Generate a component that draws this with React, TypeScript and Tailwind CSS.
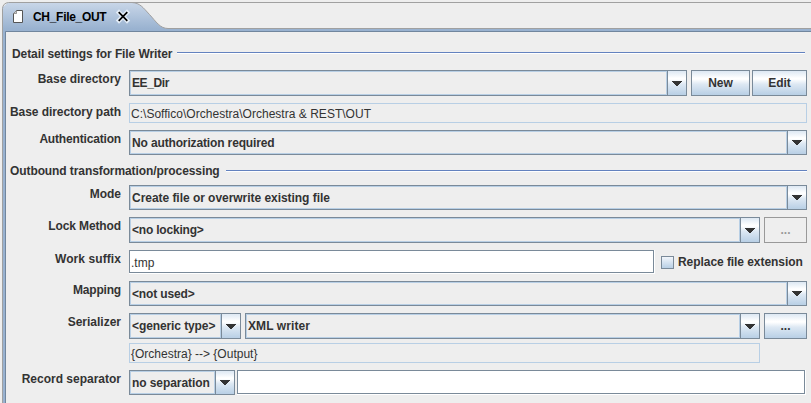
import type { ReactNode } from 'react';

const FONT = "font-['Liberation_Sans',Arial,sans-serif]";
const STEEL = 'bg-[linear-gradient(180deg,#dde8f3_0%,#ffffff_30%,#ffffff_34%,#dde8f3_55%,#b8cfe5_100%)]';

function Arrow() {
  return (
    <svg width="10" height="5" viewBox="0 0 10 5" shapeRendering="crispEdges" fill="#333333">
      <rect x="0" y="0" width="10" height="1" />
      <rect x="1" y="1" width="8" height="1" />
      <rect x="2" y="2" width="6" height="1" />
      <rect x="3" y="3" width="4" height="1" />
      <rect x="4" y="4" width="2" height="1" />
    </svg>
  );
}

function Combo({ text, className, spacing = '' }: { text: string; className: string; spacing?: string }) {
  return (
    <div className={`flex self-stretch border border-[#7a8a99] ${className}`}>
      <div className="flex-1 whitespace-nowrap border border-[#b8cfe5] pl-[1px] pt-[3px] leading-4 font-bold">
        <span className={spacing}>{text}</span>
      </div>
      <div className={`flex w-[19px] items-center justify-center border-l border-[#7a8a99] ${STEEL}`}>
        <Arrow />
      </div>
    </div>
  );
}

function Button({ text, className }: { text: string; className: string }) {
  return (
    <button className={`self-stretch border border-[#7a8a99] font-bold leading-4 ${STEEL} ${className}`}>
      {text}
    </button>
  );
}

function ReadOnly({ text, className, spacing = '' }: { text: string; className: string; spacing?: string }) {
  return (
    <div className={`border border-[#b8cfe5] pl-[1px] pt-[2px] leading-4 ${className}`}>
      <span className={spacing}>{text}</span>
    </div>
  );
}

function Field({ text, className }: { text?: string; className: string }) {
  return (
    <div className={`border-b border-r border-white ${className}`}>
      <div className="h-full border border-[#7a8a99] bg-white pl-[1px] pt-[4px] leading-4">{text}</div>
    </div>
  );
}

function Row({ label, className, spacing = '', children }: { label?: string; className: string; spacing?: string; children: ReactNode }) {
  return (
    <div className={`flex ${className}`}>
      <div className="mr-2 w-[115px] shrink-0 whitespace-nowrap pt-[1px] text-right font-bold leading-4">
        <span className={spacing}>{label}</span>
      </div>
      {children}
    </div>
  );
}

function Section({ title, className, titleClass }: { title: string; className: string; titleClass: string }) {
  return (
    <div className={`flex items-start ${className}`}>
      <div className={`shrink-0 whitespace-nowrap font-bold leading-4 ${titleClass}`}>{title}</div>
      <div className="mt-[7px] h-[2px] flex-1 border-b border-t border-b-white border-t-[#6382bf]" />
    </div>
  );
}

export default function App() {
  return (
    <div className={`h-[403px] w-[811px] overflow-hidden bg-[#eeeeee] text-[12px] text-[#333333] ${FONT}`}>
      <div className="relative h-8">
        <svg className="absolute inset-0" width="811" height="32" viewBox="0 0 811 32">
          <defs>
            <linearGradient id="tab" x1="0" y1="3" x2="0" y2="29" gradientUnits="userSpaceOnUse">
              <stop offset="0" stopColor="#c8d6e8" />
              <stop offset="1" stopColor="#99b2d0" />
            </linearGradient>
          </defs>
          <path d="M2 32V8L8 2.5H132C140 3 143 7.5 149.5 14.5C156 21.5 160 28.5 168 28.5H811V32Z" fill="url(#tab)" />
          <path d="M2.5 32V8.5Q3 3 8.5 2.5H811M132 2.5C140 3 143 7.5 149.5 14.5C156 21.5 160 28.5 168 28.5H811" fill="none" stroke="#a0a0a0" />
          <path d="M5.5 32V31.5H811" fill="none" stroke="#71869e" />
          <path d="M16.5 10.5H22.5V22.5H13.5V13.5Z" fill="#ffffff" stroke="#555555" />
          <path d="M13.5 13.5H16.5V10.5" fill="#cccccc" stroke="#777777" strokeWidth="0.7" />
          <path d="M119 12.5L127 20.5M127 12.5L119 20.5" stroke="#e4edf7" strokeWidth="4.5" strokeLinecap="square" />
          <path d="M118.7 12.2L127.3 20.8M127.3 12.2L118.7 20.8" stroke="#000000" strokeWidth="1.7" />
        </svg>
        <div className="relative pl-[33px] pt-[9px] font-bold leading-4 tracking-[-0.3px] text-black">CH_File_OUT</div>
      </div>
      <div className="flex h-[371px]">
        <div className="ml-[2px] w-1 shrink-0 border-l border-r border-l-[#a0a0a0] border-r-[#71869e] bg-[#99b2d0]" />
        <div className="min-w-0 flex-1">
          <Section title="Detail settings for File Writer" className="ml-[6px] mt-[13px] h-[25px] w-[793px]" titleClass="w-[165px] pt-[1px] tracking-[-0.09px]" />
          <Row label="Base directory" className="h-[26px]">
            <Combo text="EE_Dir" spacing="tracking-[-0.4px]" className="w-[558px]" />
            <Button text="New" className="ml-1 w-[59px]" />
            <Button text="Edit" className="ml-[2px] w-[55px]" />
          </Row>
          <Row label="Base directory path" spacing="tracking-[-0.05px]" className="mt-[7px] h-5">
            <ReadOnly text="C:\Soffico\Orchestra\Orchestra & REST\OUT" spacing="tracking-[0.02px]" className="w-[678px]" />
          </Row>
          <Row label="Authentication" spacing="tracking-[-0.17px]" className="mt-[7px] h-[25px]">
            <Combo text="No authorization required" spacing="tracking-[-0.14px]" className="w-[678px]" />
          </Row>
          <Section title="Outbound transformation/processing" className="ml-1 mt-[8px] h-[22px] w-[797px]" titleClass="w-[216px] tracking-[-0.09px]" />
          <Row label="Mode" className="h-[25px]">
            <Combo text="Create file or overwrite existing file" spacing="tracking-[-0.04px]" className="w-[678px]" />
          </Row>
          <Row label="Lock Method" spacing="tracking-[-0.12px]" className="mt-[7px] h-[26px]">
            <Combo text="<no locking>" spacing="tracking-[-0.2px]" className="w-[631px]" />
            <button className="ml-1 w-[43px] border border-[#999999] font-bold leading-4 text-[#999999]">...</button>
          </Row>
          <Row label="Work suffix" spacing="tracking-[0.08px]" className="mt-[7px] h-6">
            <Field text=".tmp" className="w-[526px]" />
            <div className="ml-[6px] mt-[6px] size-[13px] border border-[#7a8a99] bg-linear-to-b from-[#f2f6fb] to-[#b8cfe5]" />
            <div className="ml-1 mt-1 whitespace-nowrap font-bold leading-4 tracking-[-0.06px]">Replace file extension</div>
          </Row>
          <Row label="Mapping" spacing="tracking-[-0.2px]" className="mt-[7px] h-[25px]">
            <Combo text="<not used>" spacing="tracking-[-0.15px]" className="w-[678px]" />
          </Row>
          <Row label="Serializer" className="mt-[7px] h-[26px]">
            <Combo text="<generic type>" spacing="tracking-[-0.1px]" className="w-[112px]" />
            <Combo text="XML writer" spacing="tracking-[0.1px]" className="ml-1 w-[515px]" />
            <Button text="..." className="ml-1 w-[43px]" />
          </Row>
          <Row className="mt-1 h-5">
            <ReadOnly text="{Orchestra} --> {Output}" className="w-[631px]" />
          </Row>
          <Row label="Record separator" className="mt-[7px] h-[25px]">
            <Combo text="no separation" spacing="tracking-[-0.08px]" className="w-[106px]" />
            <Field className="ml-[2px] w-[569px]" />
          </Row>
        </div>
      </div>
    </div>
  );
}
